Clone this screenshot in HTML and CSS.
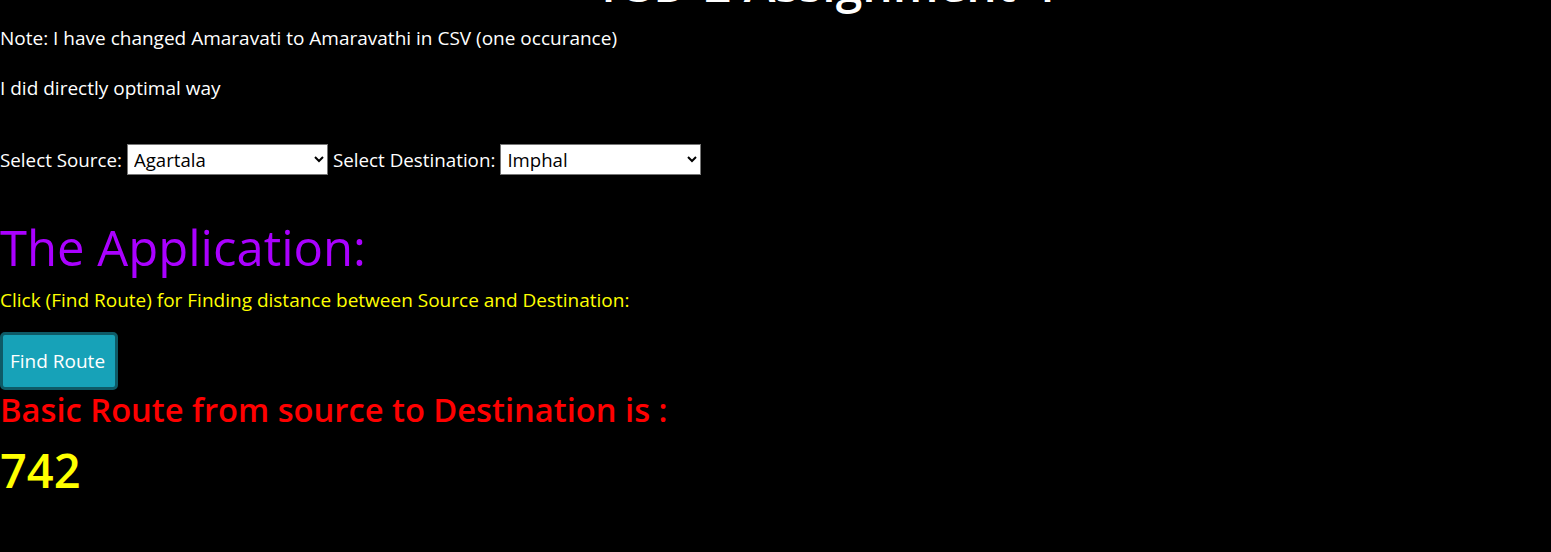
FILE: index.html
```html
<!DOCTYPE html>
<html>
<head>
<meta charset="utf-8">
<link rel="stylesheet" href="styles.css">
</head>
<body>
<h1 class="title">FSD-2 Assignment 4</h1>
<p class="note">Note: I have changed Amaravati to Amaravathi in CSV (one occurance)</p>
<p class="note">I did directly optimal way</p>
<div class="pickers">
  <label class="lbl">Select Source:</label>
  <select class="sel"><option>Agartala</option></select>
  <label class="lbl">Select Destination:</label>
  <select class="sel"><option>Imphal</option></select>
</div>
<h2 class="app">The Application:</h2>
<p class="hint">Click (Find Route) for Finding distance between Source and Destination:</p>
<button class="btn">Find Route</button>
<h3 class="result">Basic Route from source to Destination is :</h3>
<div class="dist">742</div>
</body>
</html>
```
FILE: styles.css
```css
html, body {
  margin: 0;
  background: #000;
}
body {
  color: #fff;
  font-family: "Open Sans", "Noto Sans", sans-serif;
  font-size: 19px;
}
.title {
  margin: -44px 0 0 0;
  padding-left: 106px;
  text-align: center;
  font-size: 48px;
  font-weight: 600;
  line-height: 56px;
}
.note {
  margin: 13px 0 0 0;
  font-size: 19px;
  line-height: 26px;
}
.note + .note {
  margin-top: 24px;
}
.pickers {
  display: flex;
  align-items: center;
  gap: 5px;
  margin-top: 43px;
}
.lbl {
  font-size: 18.8px;
}
.sel {
  width: 201px;
  height: 31px;
  font-family: inherit;
  font-size: 18.6px;
  background: #fff;
  color: #000;
  border: 1px solid #767676;
  border-radius: 0;
  padding: 0 2px;
}
.app {
  margin: 44px 0 0 0;
  color: #aa00ff;
  font-size: 49px;
  font-weight: 400;
  line-height: 56px;
}
.hint {
  margin: 12px 0 0 0;
  color: #ffff00;
  font-size: 19px;
  line-height: 26px;
}
.btn {
  display: block;
  margin-top: 19px;
  background: #17a2b8;
  color: #fff;
  font-family: inherit;
  font-size: 19px;
  border: 3px solid #0e5a66;
  border-radius: 5px;
  padding: 0 0 0 7px;
  text-align: left;
  height: 58px;
  width: 118px;
}
.result {
  margin: 0;
  color: #ff0000;
  font-size: 32.7px;
  font-weight: 600;
  line-height: 40px;
}
.dist {
  margin-top: 14px;
  color: #ffff00;
  font-size: 47px;
  font-weight: 600;
  line-height: 52px;
}
```
